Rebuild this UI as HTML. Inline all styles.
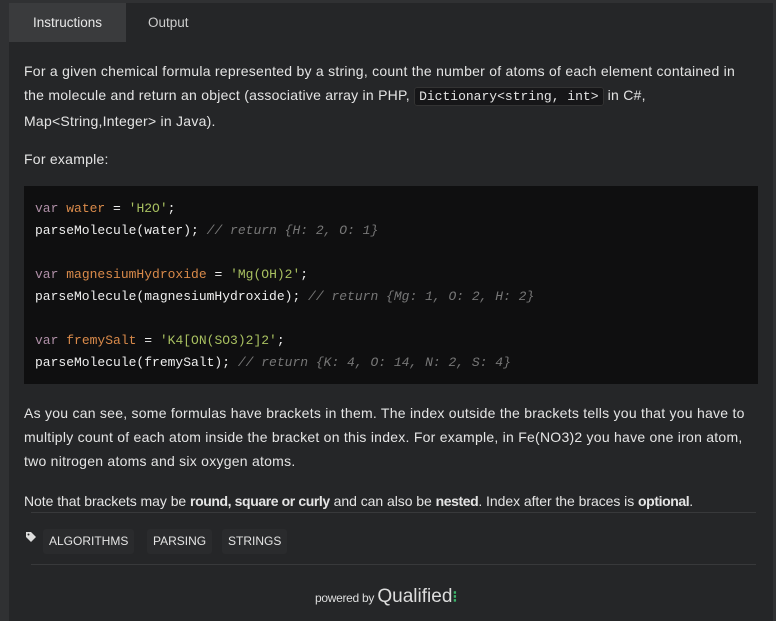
<!DOCTYPE html>
<html><head><style>
body{margin:0;width:776px;height:621px;background:#303133;overflow:hidden;font-family:"Liberation Sans",sans-serif;}
.panel{position:absolute;left:9px;top:3px;width:764px;height:618px;background:#252628;}
.tab{position:absolute;top:0;height:39px;line-height:39px;font-size:13.5px;color:#ccc;}
.t1{left:0;width:117px;background:#3a3b3d;color:#e8e8e8;text-align:center;}
.t2{left:139px;}
.c{position:absolute;left:15px;width:745px;color:#e4e4e4;font-size:14px;letter-spacing:0.25px;line-height:24px;white-space:nowrap;}
code{font-family:"Liberation Mono",monospace;font-size:13px;background:#161618;border:1px solid #333;border-radius:3px;padding:1px 4px;letter-spacing:0;}
pre{position:absolute;left:15px;top:183px;width:734px;height:198px;margin:0;background:#0f0f10;box-sizing:border-box;padding:12px 11px;font-family:"Liberation Mono",monospace;font-size:13px;line-height:22px;color:#eee;letter-spacing:0;}
.k{color:#b090a8}.v{color:#d98a4a}.s{color:#a8c060}.m{color:#777;font-style:italic}
.hr{position:absolute;left:22px;width:725px;height:1px;background:#38393b;}
.tag{position:absolute;top:526px;height:25px;line-height:25px;background:#2a2b2d;border-radius:3px;color:#e4e4e4;font-size:12px;padding:0 6px;}
</style></head><body>
<div class="panel">
<div class="tab t1">Instructions</div>
<div class="tab t2">Output</div>
<div class="c" style="top:56px">For a given chemical formula represented by a string, count the number of atoms of each element contained in<br>the molecule and return an object (associative array in PHP, <code>Dictionary&lt;string, int&gt;</code> in C#,<br>Map&lt;String,Integer&gt; in Java).</div>
<div class="c" style="top:144px">For example:</div>
<pre><span class="k">var</span> <span class="v">water</span> = <span class="s">'H2O'</span>;
parseMolecule(water); <span class="m">// return {H: 2, O: 1}</span>

<span class="k">var</span> <span class="v">magnesiumHydroxide</span> = <span class="s">'Mg(OH)2'</span>;
parseMolecule(magnesiumHydroxide); <span class="m">// return {Mg: 1, O: 2, H: 2}</span>

<span class="k">var</span> <span class="v">fremySalt</span> = <span class="s">'K4[ON(SO3)2]2'</span>;
parseMolecule(fremySalt); <span class="m">// return {K: 4, O: 14, N: 2, S: 4}</span></pre>
<div class="c" style="top:398px">As you can see, some formulas have brackets in them. The index outside the brackets tells you that you have to<br>multiply count of each atom inside the bracket on this index. For example, in Fe(NO3)2 you have one iron atom,<br>two nitrogen atoms and six oxygen atoms.</div>
<div class="c" style="top:486px;letter-spacing:-0.05px">Note that brackets may be <b style="letter-spacing:-0.4px">round, square or curly</b> and can also be <b style="letter-spacing:-0.4px">nested</b>. Index after the braces is <b style="letter-spacing:-0.4px">optional</b>.</div>
<div class="hr" style="top:509px"></div>
<svg style="position:absolute;left:16px;top:528px" width="12" height="12" viewBox="0 0 12 12"><path d="M1 1h5l5 5-5 5-5-5z" fill="#ddd"/><circle cx="3.5" cy="3.5" r="1" fill="#252628"/></svg>
<div class="tag" style="left:34px">ALGORITHMS</div>
<div class="tag" style="left:138px">PARSING</div>
<div class="tag" style="left:213px">STRINGS</div>
<div class="hr" style="top:561px"></div>
<div style="position:absolute;left:306px;top:583px;color:#ddd;font-size:12px;"><span style="letter-spacing:-0.3px">powered by</span> <span style="font-size:19px;">Qualified</span><span style="color:#3bb36a;font-weight:bold;font-size:16px">⁝</span></div>
</div>
</body></html>
